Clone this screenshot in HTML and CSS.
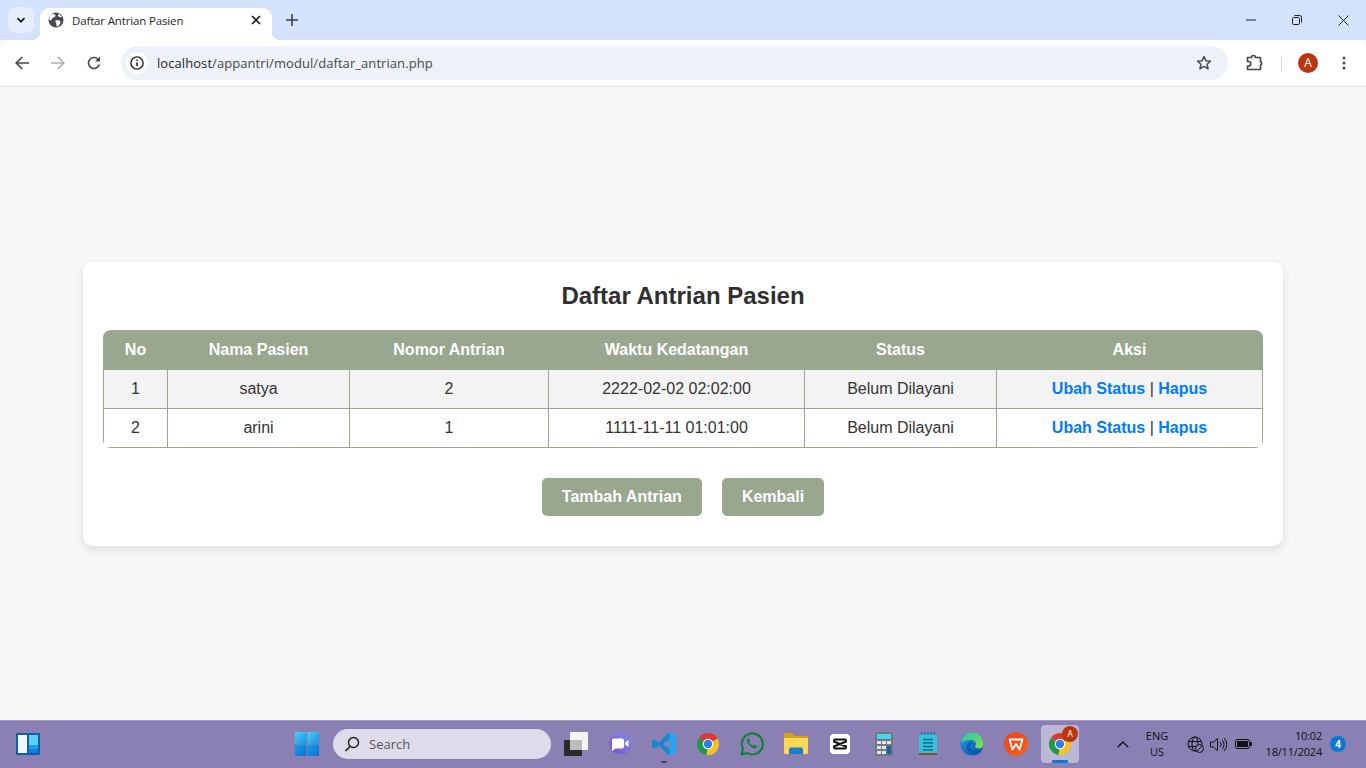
FILE: index.html
```html
<!DOCTYPE html>
<html lang="en">
<head>
    <meta charset="UTF-8">
    <title>Daftar Antrian Pasien</title>
    <link rel="stylesheet" href="styles.css">
</head>
<body>

    <div class="browser">
        <div class="tabstrip">
            <div class="tab-search">
                <svg width="12" height="12" viewBox="0 0 12 12"><path d="M2.500 4.200 6 7.700l3.500-3.500" fill="none" stroke="#1f1f1f" stroke-width="1.800"/></svg>
            </div>
            <div class="tab">
                <svg class="tab-favicon" width="16" height="16" viewBox="0 0 16 16">
                    <circle cx="8" cy="8" r="7.500" fill="#45494e"/>
                    <path d="M5 1.500 7.500 3 7 5 4.500 6 3 8.500 1 7.500 2 3.500zM9 8l3.500 1-.5 3-2 2.500-1.500-.5-.5-3.500-1-1.500zM10.500 1.500 14 4.500l-1.500 1L10 4z" fill="#fff"/>
                </svg>
                <span class="tab-title">Daftar Antrian Pasien</span>
                <svg class="tab-close" width="10" height="10" viewBox="0 0 10 10"><path d="M1 1l8 8M9 1 1 9" stroke="#1f1f1f" stroke-width="1.700"/></svg>
            </div>
            <svg class="new-tab" width="12" height="12" viewBox="0 0 12 12"><path d="M6 0v12M0 6h12" stroke="#3c4043" stroke-width="1.600"/></svg>
            <div class="win-controls">
                <div class="win-btn"><svg width="10" height="10" viewBox="0 0 10 10"><path d="M0 5h10" stroke="#1f1f1f"/></svg></div>
                <div class="win-btn"><svg width="10" height="10" viewBox="0 0 10 10"><rect x=".5" y="2.500" width="7" height="7" rx="1.200" fill="none" stroke="#1f1f1f"/><path d="M2.500 .5h5.200a1.800 1.800 0 0 1 1.800 1.800v5.200" fill="none" stroke="#1f1f1f"/></svg></div>
                <div class="win-btn"><svg width="11" height="11" viewBox="0 0 11 11"><path d="M.5.5l10 10M10.500.5l-10 10" stroke="#1f1f1f"/></svg></div>
            </div>
        </div>
        <div class="toolbar">
            <div class="nav-btn"><svg width="14" height="14" viewBox="0 0 14 14"><path d="M14 7H1.500M7.200 1 1.200 7l6 6" fill="none" stroke="#474747" stroke-width="1.700"/></svg></div>
            <div class="nav-btn"><svg width="14" height="14" viewBox="0 0 14 14"><path d="M0 7h12.500M6.800 1l6 6-6 6" fill="none" stroke="#b0b0b0" stroke-width="1.700"/></svg></div>
            <div class="nav-btn"><svg width="14" height="14" viewBox="0 0 14 14"><path d="M12.300 8.500A5.500 5.500 0 1 1 11 3.200" fill="none" stroke="#474747" stroke-width="1.600"/><path d="M13 .5v5H8z" fill="#474747"/></svg></div>
            <div class="omnibox">
                <div class="site-info">
                    <svg width="14" height="14" viewBox="0 0 14 14"><circle cx="7" cy="7" r="6.100" fill="none" stroke="#1f1f1f" stroke-width="1.400"/><path d="M7 6.200v4M7 3.500v1.500" stroke="#1f1f1f" stroke-width="1.500"/></svg>
                </div>
                <div class="url"><span class="url-host">localhost</span>/appantri/modul/daftar_antrian.php</div>
                <svg class="star" width="16" height="16" viewBox="0 0 16 16"><path d="M8 1.500l1.900 4.300 4.600.4-3.500 3 1.100 4.600L8 11.400l-4.100 2.400 1.100-4.600-3.500-3 4.600-.4z" fill="none" stroke="#474747" stroke-width="1.500" stroke-linejoin="round"/></svg>
            </div>
            <svg class="extensions" width="18" height="18" viewBox="0 0 18 18"><path d="M1.500 3.500h4a2 2 0 0 1 4 0h5v4.200a2 2 0 0 1 0 3.600v4.200H1.500v-3.500h1a2 2 0 0 0 0-4.500h-1z" fill="none" stroke="#474747" stroke-width="1.700" stroke-linejoin="round"/></svg>
            <div class="divider"></div>
            <div class="avatar">A</div>
            <svg class="kebab" width="4" height="14" viewBox="0 0 4 14"><circle cx="2" cy="2" r="1.500" fill="#474747"/><circle cx="2" cy="7" r="1.500" fill="#474747"/><circle cx="2" cy="12" r="1.500" fill="#474747"/></svg>
        </div>
    </div>

    <main class="page">
        <div class="card">
            <h2>Daftar Antrian Pasien</h2>
            <div class="table-wrap">
                <table>
                    <colgroup>
                        <col class="col-no">
                        <col class="col-nama">
                        <col class="col-nomor">
                        <col class="col-waktu">
                        <col class="col-status">
                        <col>
                    </colgroup>
                    <thead>
                        <tr>
                            <th>No</th>
                            <th>Nama Pasien</th>
                            <th>Nomor Antrian</th>
                            <th>Waktu Kedatangan</th>
                            <th>Status</th>
                            <th>Aksi</th>
                        </tr>
                    </thead>
                    <tbody>
                        <tr>
                            <td>1</td>
                            <td>satya</td>
                            <td>2</td>
                            <td>2222-02-02 02:02:00</td>
                            <td>Belum Dilayani</td>
                            <td><a href="#">Ubah Status</a> | <a href="#">Hapus</a></td>
                        </tr>
                        <tr>
                            <td>2</td>
                            <td>arini</td>
                            <td>1</td>
                            <td>1111-11-11 01:01:00</td>
                            <td>Belum Dilayani</td>
                            <td><a href="#">Ubah Status</a> | <a href="#">Hapus</a></td>
                        </tr>
                    </tbody>
                </table>
            </div>
            <div class="actions">
                <a class="btn" href="#">Tambah Antrian</a>
                <a class="btn" href="#">Kembali</a>
            </div>
        </div>
    </main>

    <footer class="taskbar">
        <svg class="widgets" width="24" height="22" viewBox="0 0 24 22">
            <rect width="24" height="22" rx="1" fill="#0f5fae"/>
            <rect x="2" y="2" width="9" height="18" fill="#f3f6fa"/>
            <rect x="13" y="2" width="9" height="10" fill="#5ed0f7"/>
            <rect x="13" y="12" width="9" height="4" fill="#1c9be8"/>
            <rect x="13" y="16" width="9" height="4" fill="#0d7fd8"/>
        </svg>
        <svg class="start" width="24" height="24" viewBox="0 0 24 24">
            <defs>
                <linearGradient id="winA" x1="0" y1="0" x2="1" y2="1"><stop offset="0" stop-color="#4fd0f8"/><stop offset="1" stop-color="#1590e6"/></linearGradient>
                <linearGradient id="winB" x1="0" y1="0" x2="1" y2="1"><stop offset="0" stop-color="#1aa0ee"/><stop offset="1" stop-color="#0a6fd0"/></linearGradient>
            </defs>
            <rect width="11.500" height="11.500" fill="url(#winA)"/>
            <rect x="12.500" width="11.500" height="11.500" fill="url(#winA)"/>
            <rect y="12.500" width="11.500" height="11.500" fill="url(#winB)"/>
            <rect x="12.500" y="12.500" width="11.500" height="11.500" fill="url(#winB)"/>
        </svg>
        <div class="search">
            <svg width="16" height="16" viewBox="0 0 16 16"><circle cx="9.500" cy="6.500" r="5" fill="none" stroke="#222" stroke-width="1.500"/><path d="M6 10.500 1.500 15" stroke="#222" stroke-width="1.700"/></svg>
            <span>Search</span>
        </div>
        <div class="task-icon">
            <svg width="24" height="24" viewBox="0 0 24 24">
                <rect x="0" y="8" width="18" height="16" fill="#2a2a2a"/>
                <rect x="6" y="0" width="18" height="18" rx="1" fill="#f4f4f4"/>
                <rect x="6" y="8" width="12" height="10" fill="#bdbdbd"/>
            </svg>
        </div>
        <div class="task-icon">
            <svg width="24" height="24" viewBox="0 0 24 24">
                <defs>
                    <linearGradient id="meetA" x1="0" y1="1" x2="1" y2="0"><stop offset="0" stop-color="#7c4fd0"/><stop offset="1" stop-color="#7f8fe6"/></linearGradient>
                </defs>
                <circle cx="12.500" cy="11.500" r="11" fill="url(#meetA)"/>
                <path d="M4 8.500a2 2 0 0 1 2-2h8a2 2 0 0 1 2 2v6a2 2 0 0 1-2 2H7.500L4 19z" fill="#fff"/>
                <path d="M17 10.500l3.500-2.500v7L17 12.500z" fill="#fff"/>
            </svg>
        </div>
        <div class="task-icon running">
            <svg width="24" height="26" viewBox="0 0 24 26">
                <path d="M17.500 1 24 4v18l-6.500 3L6.500 14.500 2.500 18 0 16.500v-7L2.500 8l4 3.500zM17.500 8 11 13l6.500 5z" fill="#1b86d0" fill-rule="evenodd"/>
                <path d="M17.500 1 24 4v18l-6.500 3z" fill="#2aa3ee"/>
            </svg>
        </div>
        <div class="task-icon">
            <svg width="24" height="24" viewBox="0 0 24 24">
                <path d="M12 12 21.530 6.500A11 11 0 0 0 2.900 5.800z" fill="#db3a2f"/>
                <path d="M12 12 2.900 5.800A11 11 0 0 0 10.500 22.900z" fill="#1f9748"/>
                <path d="M12 12 10.500 22.900A11 11 0 0 0 21.530 6.500z" fill="#f6c221"/>
                <circle cx="12" cy="12" r="5.300" fill="#fff"/>
                <circle cx="12" cy="12" r="4.200" fill="#2f7de9"/>
            </svg>
        </div>
        <div class="task-icon">
            <svg width="24" height="24" viewBox="0 0 24 24">
                <path d="M1.500 22.500 3 16.800A10.500 10.500 0 1 1 7 21z" fill="none" stroke="#14803c" stroke-width="2.200" stroke-linejoin="round"/>
                <path d="M8 6.500c-1.200 1-1.300 2.700-.3 4.600 1.300 2.500 3 4 5.300 5 1.700.6 3.200.2 4-1 .3-.5.3-1 .1-1.200l-2.400-1.200c-.3-.1-.6 0-.8.300l-.8 1c-1.800-.7-3.200-2-4-3.700l.7-.9c.2-.3.2-.6.100-.8l-1-2.200c-.2-.3-.6-.3-.9-.1z" fill="#14803c"/>
            </svg>
        </div>
        <div class="task-icon">
            <svg width="24" height="24" viewBox="0 0 24 24">
                <path d="M0 2a1 1 0 0 1 1-1h7l2.500 3H23a1 1 0 0 1 1 1v4H0z" fill="#d8a10e"/>
                <path d="M0 6h24v15a1 1 0 0 1-1 1H1a1 1 0 0 1-1-1z" fill="#fbd757"/>
                <path d="M5 17.500a2 2 0 0 1 2-2h10a2 2 0 0 1 2 2V22H5z" fill="#1a7ec8"/>
            </svg>
        </div>
        <div class="task-icon">
            <svg width="20" height="20" viewBox="0 0 20 20">
                <rect width="20" height="20" rx="4" fill="#fff"/>
                <path d="M4 5.500h12M4 14.500h12M4 5.500v2L16 12.500v2M16 5.500v2L4 12.500v2" fill="none" stroke="#111" stroke-width="2"/>
            </svg>
        </div>
        <div class="task-icon">
            <svg width="20" height="24" viewBox="0 0 20 24">
                <rect x="1" width="18" height="24" rx="1" fill="#6f7a80"/>
                <rect x="3" y="2" width="14" height="5" fill="#46d3ee"/>
                <rect x="3" y="9" width="4" height="3" fill="#e6e6e6"/>
                <rect x="8" y="9" width="4" height="3" fill="#e6e6e6"/>
                <rect x="13" y="9" width="4" height="3" fill="#e6e6e6"/>
                <rect x="3" y="14" width="4" height="3" fill="#e6e6e6"/>
                <rect x="8" y="14" width="4" height="3" fill="#e6e6e6"/>
                <rect x="3" y="19" width="4" height="3" fill="#e6e6e6"/>
                <rect x="8" y="19" width="4" height="3" fill="#e6e6e6"/>
                <rect x="13" y="14" width="4" height="8" fill="#1b5fa8"/>
            </svg>
        </div>
        <div class="task-icon">
            <svg width="20" height="24" viewBox="0 0 20 24">
                <rect x="1" y="2" width="18" height="20" fill="#35c0dc"/>
                <rect x="1" y="21" width="18" height="2" fill="#8a4f24"/>
                <path d="M5 7.500h10M5 11h10M5 14.500h10M5 18h10" stroke="#0f6d96" stroke-width="1.600"/>
                <path d="M4 0v3M7 0v3M10 0v3M13 0v3M16 0v3" stroke="#14709a" stroke-width="1.200"/>
            </svg>
        </div>
        <div class="task-icon">
            <svg width="24" height="24" viewBox="0 0 24 24">
                <defs>
                    <linearGradient id="edgeA" x1="0" y1="0" x2="1" y2="1"><stop offset="0" stop-color="#2ec4a0"/><stop offset="1" stop-color="#7fe05c"/></linearGradient>
                    <linearGradient id="edgeB" x1="0" y1="0" x2="1" y2="1"><stop offset="0" stop-color="#1b9de2"/><stop offset="1" stop-color="#0c4fa8"/></linearGradient>
                </defs>
                <circle cx="12" cy="12" r="11.500" fill="url(#edgeB)"/>
                <path d="M2 8C4 2 9 .5 12 .5 18 .5 23.500 5 23.500 12c0 3-2 4.500-4.500 4.500-2 0-4-1-4-2.500 2-1.500 1-5.500-3-6C7 7.500 3.500 8.500 2 11z" fill="url(#edgeA)"/>
                <path d="M19 18c-3 1.500-7 1-8.500-2-1-2 0-5 3-5.500-3-1-6.500.5-7 4 0 4 4 8 8.500 8 3 0 5-1.500 7-4z" fill="#0b5ab4"/>
            </svg>
        </div>
        <div class="task-icon">
            <svg width="24" height="24" viewBox="0 0 24 24">
                <defs>
                    <linearGradient id="wpsA" x1="0" y1="0" x2="1" y2="1"><stop offset="0" stop-color="#f0401f"/><stop offset="1" stop-color="#f0641a"/></linearGradient>
                </defs>
                <circle cx="12" cy="12" r="12" fill="url(#wpsA)"/>
                <path d="M5.500 7.500h13l-3 10-3.500-5.500L8.500 17.500z" fill="none" stroke="#fff" stroke-width="1.800" stroke-linejoin="round"/>
            </svg>
        </div>
        <div class="task-icon active">
            <svg width="24" height="24" viewBox="0 0 24 24">
                <path d="M12 12 21.530 6.500A11 11 0 0 0 2.900 5.800z" fill="#db3a2f"/>
                <path d="M12 12 2.900 5.800A11 11 0 0 0 10.500 22.900z" fill="#1f9748"/>
                <path d="M12 12 10.500 22.900A11 11 0 0 0 21.530 6.500z" fill="#f6c221"/>
                <circle cx="12" cy="12" r="5.300" fill="#fff"/>
                <circle cx="12" cy="12" r="4.200" fill="#2f7de9"/>
            </svg>
            <span class="task-badge">A</span>
        </div>
        <div class="tray">
            <svg class="tray-chevron" width="12" height="7" viewBox="0 0 12 7"><path d="M.7 6.300 6 1l5.300 5.300" fill="none" stroke="#111" stroke-width="1.300"/></svg>
            <div class="lang">ENG<br>US</div>
            <svg class="tray-globe" width="17" height="17" viewBox="0 0 17 17">
                <circle cx="8" cy="8" r="7" fill="none" stroke="#111"/>
                <ellipse cx="8" cy="8" rx="3" ry="7" fill="none" stroke="#111"/>
                <path d="M1.500 5.500h13M1.500 10.500h8" stroke="#111"/>
                <circle cx="12.500" cy="12.500" r="4" fill="#8b80b4" stroke="#111"/>
                <path d="M10 15l5-5" stroke="#111"/>
            </svg>
            <svg class="tray-sound" width="17" height="15" viewBox="0 0 17 15"><path d="M.5 5h3L7.500 1.500v12L3.500 10h-3z" fill="none" stroke="#111"/><path d="M10 5a3.500 3.500 0 0 1 0 5M12 3a6 6 0 0 1 0 9M14 1a9 9 0 0 1 0 13" fill="none" stroke="#111"/></svg>
            <svg class="tray-battery" width="17" height="10" viewBox="0 0 17 10"><rect x=".5" y=".5" width="14" height="9" rx="2" fill="none" stroke="#111"/><rect x="2" y="2" width="11" height="6" fill="#111"/><rect x="15" y="3" width="2" height="4" fill="#111"/></svg>
            <div class="clock">10:02<br>18/11/2024</div>
            <div class="notif">4</div>
        </div>
    </footer>

</body>
</html>
```

FILE: styles.css
```css
* {
    box-sizing: border-box;
}

html, body {
    height: 100%;
}

body {
    margin: 0;
    font-family: "Liberation Sans", Arial, sans-serif;
    background-color: #f7f7f7;
    display: flex;
    flex-direction: column;
    overflow: hidden;
}

/* browser frame */
.browser {
    flex: none;
    font-family: "Open Sans", "Noto Sans", sans-serif;
}

.tabstrip {
    height: 40px;
    background-color: #d3e3fd;
    display: flex;
    align-items: flex-end;
    padding-left: 8px;
}

.tab-search {
    width: 26px;
    height: 26px;
    margin-bottom: 7px;
    border-radius: 8px;
    background-color: #e6eefb;
    display: flex;
    align-items: center;
    justify-content: center;
}

.tab {
    position: relative;
    width: 232px;
    height: 32px;
    margin-left: 6px;
    padding: 0 11px 8px 8px;
    background-color: #fff;
    border-radius: 9px 9px 0 0;
    display: flex;
    align-items: center;
}

.tab::before,
.tab::after {
    content: "";
    position: absolute;
    bottom: 0;
    width: 8px;
    height: 8px;
}

.tab::before {
    left: -8px;
    background: radial-gradient(circle at 0 0, transparent 8px, #fff 8.5px);
}

.tab::after {
    right: -8px;
    background: radial-gradient(circle at 100% 0, transparent 8px, #fff 8.5px);
}

.tab-title {
    flex: 1;
    margin-left: 8px;
    font-size: 11.500px;
    letter-spacing: -0.15px;
    color: #1f1f1f;
}

.new-tab {
    margin: 0 0 14px 14px;
}

.win-controls {
    margin-left: auto;
    align-self: flex-start;
    display: flex;
}

.win-btn {
    width: 46px;
    height: 40px;
    display: flex;
    align-items: center;
    justify-content: center;
}

.toolbar {
    height: 47px;
    background-color: #fff;
    border-bottom: 1px solid #e1e3e6;
    border-radius: 9px 9px 0 0;
    padding-left: 4px;
    display: flex;
    align-items: center;
}

.nav-btn {
    width: 36px;
    height: 36px;
    display: flex;
    align-items: center;
    justify-content: center;
}

.omnibox {
    width: 1107px;
    height: 34px;
    margin-left: 9px;
    padding: 0 16px 0 5px;
    border-radius: 17px;
    background-color: #edf2fa;
    display: flex;
    align-items: center;
}

.site-info {
    width: 22px;
    height: 22px;
    border-radius: 50%;
    background-color: #fff;
    display: flex;
    align-items: center;
    justify-content: center;
}

.url {
    flex: 1;
    margin-left: 9px;
    font-size: 13px;
    letter-spacing: 0.07px;
    color: #474747;
}

.url-host {
    color: #1f1f1f;
}

.extensions {
    margin-left: 18px;
}

.divider {
    width: 1px;
    height: 16px;
    margin-left: 17px;
    background-color: #c7d9f5;
}

.avatar {
    width: 20px;
    height: 20px;
    margin-left: 16px;
    border-radius: 50%;
    background-color: #b9360f;
    color: #fff;
    font-size: 12px;
    line-height: 20px;
    text-align: center;
}

.kebab {
    margin-left: 24px;
}

/* page */
.page {
    flex: 1;
    min-height: 0;
    padding-top: 1px;
    display: flex;
    align-items: center;
    justify-content: center;
}

.card {
    width: 1200px;
    padding: 20px 20px 30px;
    background-color: #fff;
    border-radius: 10px;
    box-shadow: 0 4px 8px rgba(0, 0, 0, 0.1);
}

h2 {
    margin: 0 0 20px;
    font-size: 24px;
    line-height: 28px;
    text-align: center;
    color: #2f2f2f;
}

.table-wrap {
    border-radius: 8px;
    overflow: hidden;
}

table {
    width: 100%;
    table-layout: fixed;
    border-collapse: collapse;
    font-size: 16px;
    text-align: center;
    color: #333;
}

.col-no {
    width: 64px;
}

.col-nama {
    width: 182px;
}

.col-nomor {
    width: 199px;
}

.col-waktu {
    width: 256px;
}

.col-status {
    width: 192px;
}

th, td {
    border: 1px solid #9aa78f;
    padding: 10px;
    line-height: 18px;
}

th {
    background-color: #9aa78f;
    color: #fff;
    font-weight: bold;
    height: 39px;
}

tbody tr:nth-child(odd) {
    background-color: #f3f3f3;
}

td a {
    color: #007bff;
    font-weight: bold;
    text-decoration: none;
}

.actions {
    margin-top: 30px;
    display: flex;
    justify-content: center;
    gap: 20px;
}

.btn {
    padding: 10px 20px;
    border-radius: 5px;
    background-color: #9aa78f;
    color: #fff;
    font-size: 16px;
    line-height: 18px;
    font-weight: bold;
    text-decoration: none;
}

/* windows taskbar */
.taskbar {
    flex: none;
    height: 48px;
    background-color: #8b80b4;
    box-shadow: inset 0 1px 0 #a59cc6;
    display: flex;
    align-items: center;
    font-family: "Open Sans", "Noto Sans", sans-serif;
    color: #111;
}

.widgets {
    margin-left: 16px;
}

.start {
    margin-left: 255px;
}

.search {
    width: 218px;
    height: 30px;
    margin: 0 3px 0 14px;
    padding-left: 11px;
    border-radius: 15px;
    background-color: #dfdbea;
    display: flex;
    align-items: center;
    gap: 9px;
    font-size: 13px;
    color: #555;
}

.task-icon {
    position: relative;
    width: 44px;
    height: 38px;
    display: flex;
    align-items: center;
    justify-content: center;
}

.task-icon.running::after,
.task-icon.active::after {
    content: "";
    position: absolute;
    left: 50%;
    bottom: 0;
    width: 6px;
    height: 2px;
    margin-left: -3px;
    border-radius: 1px;
    background-color: #4a4a5a;
}

.task-icon.active {
    width: 38px;
    margin: 0 3px;
    border-radius: 4px;
    background-color: #bdb7d6;
}

.task-icon.active::after {
    width: 16px;
    height: 3px;
    margin-left: -8px;
    background-color: #0a78d4;
}

.task-badge {
    position: absolute;
    top: 1px;
    right: 1px;
    width: 16px;
    height: 16px;
    border-radius: 50%;
    background-color: #b9360f;
    color: #fff;
    font-size: 9px;
    line-height: 16px;
    text-align: center;
}

.tray {
    margin-left: 35px;
    display: flex;
    align-items: center;
}

.lang {
    width: 36px;
    margin-left: 10px;
    font-size: 11px;
    line-height: 16px;
    text-align: center;
}

.tray-globe {
    margin-left: 12px;
}

.tray-sound {
    margin-left: 6px;
}

.tray-battery {
    margin-left: 8px;
}

.clock {
    width: 70px;
    font-size: 11px;
    letter-spacing: -0.2px;
    line-height: 16px;
    text-align: right;
}

.notif {
    width: 16px;
    height: 16px;
    margin-left: 8px;
    border-radius: 50%;
    background-color: #0a78d4;
    color: #fff;
    font-size: 10px;
    font-weight: bold;
    line-height: 16px;
    text-align: center;
}
```
